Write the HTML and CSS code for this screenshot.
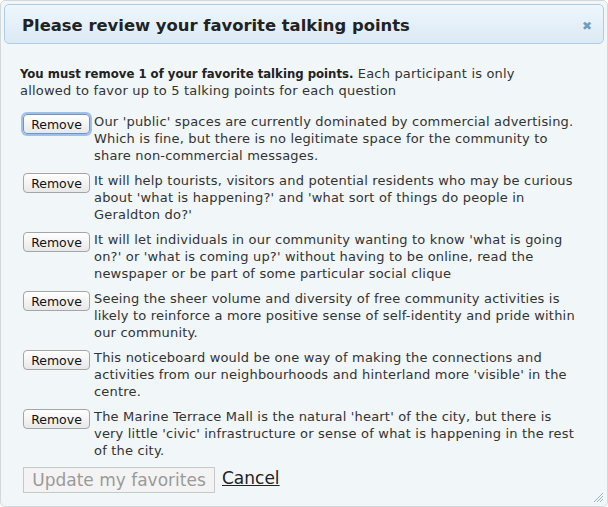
FILE: index.html
```html
<!DOCTYPE html>
<html>
<head>
<meta charset="utf-8">
<link rel="stylesheet" href="styles.css">
</head>
<body>
<div class="dialog">
  <div class="titlebar">
    <span class="title">Please review your favorite talking points</span>
    <span class="close">&#x2716;</span>
  </div>
  <div class="content">
    <p class="intro"><b>You must remove 1 of your favorite talking points.</b> Each participant is only allowed to favor up to 5 talking points for each question</p>
    <div class="item"><button class="btn focused">Remove</button><p>Our 'public' spaces are currently dominated by commercial advertising. Which is fine, but there is no legitimate space for the community to share non-commercial messages.</p></div>
    <div class="item"><button class="btn">Remove</button><p>It will help tourists, visitors and potential residents who may be curious about 'what is happening?' and 'what sort of things do people in Geraldton do?'</p></div>
    <div class="item"><button class="btn">Remove</button><p>It will let individuals in our community wanting to know 'what is going on?' or 'what is coming up?' without having to be online, read the newspaper or be part of some particular social clique</p></div>
    <div class="item"><button class="btn">Remove</button><p>Seeing the sheer volume and diversity of free community activities is likely to reinforce a more positive sense of self-identity and pride within our community.</p></div>
    <div class="item"><button class="btn">Remove</button><p>This noticeboard would be one way of making the connections and activities from our neighbourhoods and hinterland more 'visible' in the centre.</p></div>
    <div class="item"><button class="btn">Remove</button><p>The Marine Terrace Mall is the natural 'heart' of the city, but there is very little 'civic' infrastructure or sense of what is happening in the rest of the city.</p></div>
    <div class="actions">
      <button class="update" disabled>Update my favorites</button>
      <a href="#" class="cancel">Cancel</a>
    </div>
  </div>
  <svg class="grip" width="12" height="12" viewBox="0 0 12 12"><path d="M11 2L2 11M11 5L5 11M11 8L8 11" stroke="#9bb3c6" stroke-width="1"/></svg>
</div>
</body>
</html>
```
FILE: styles.css
```css
html, body {
  margin: 0;
  padding: 0;
  background: #ffffff;
}
.dialog {
  position: relative;
  width: 608px;
  height: 507px;
  box-sizing: border-box;
  border: 1px solid #d4d8da;
  border-radius: 5px;
  background: #f1f6f8;
  padding: 3px;
  font-family: "DejaVu Sans", Verdana, sans-serif;
  color: #333;
  overflow: hidden;
}
.titlebar {
  height: 40px;
  box-sizing: border-box;
  border: 1px solid #aecde4;
  border-radius: 5px;
  background: linear-gradient(#eef6fc, #dbeaf5);
  display: flex;
  align-items: center;
  justify-content: space-between;
  padding: 2px 11px 0 17px;
}
.title {
  font-weight: bold;
  font-size: 16.4px;
  color: #222;
}
.close {
  font-size: 12px;
  color: #6e9cc2;
  margin-top: 2px;
}
.content {
  padding: 21px 20px 0 16px;
  font-size: 13px;
  letter-spacing: 0.19px;
  line-height: 17px;
}
.intro {
  margin: 0 0 14px;
  padding-right: 28px;
}
.intro b {
  font-family: "DejaVu Sans Condensed", "DejaVu Sans", sans-serif;
  letter-spacing: 0;
  color: #222;
}
.item {
  display: flex;
  align-items: flex-start;
  gap: 4px;
  margin-bottom: 8px;
}
.item p {
  margin: 0;
  flex: 1;
}
.btn {
  flex: none;
  margin: 1px 0 0 3px;
  width: 67px;
  height: 20px;
  padding: 0;
  font-family: "DejaVu Sans", sans-serif;
  font-size: 12.5px;
  letter-spacing: 0;
  color: #111;
  background: linear-gradient(#ffffff, #e8e8e8);
  border: 1px solid #a5a5a5;
  border-radius: 4px;
}
.btn.focused {
  border-color: #6f94c8;
  box-shadow: 0 0 0 2px #9fc0ea;
}
.actions {
  display: flex;
  align-items: center;
  gap: 7px;
  margin-top: 6px;
  margin-left: 3px;
}
.update {
  width: 192px;
  height: 26px;
  padding: 0;
  font-family: "DejaVu Sans", sans-serif;
  font-size: 17px;
  letter-spacing: 0;
  color: #9a9a9a;
  background: #f3f3f3;
  border: 1px solid #c8c8c8;
  border-radius: 0;
}
.cancel {
  font-size: 17px;
  letter-spacing: 0;
  color: #222;
  text-decoration: underline;
  margin-top: -4px;
}
.grip {
  position: absolute;
  right: 3px;
  bottom: 3px;
}
```
